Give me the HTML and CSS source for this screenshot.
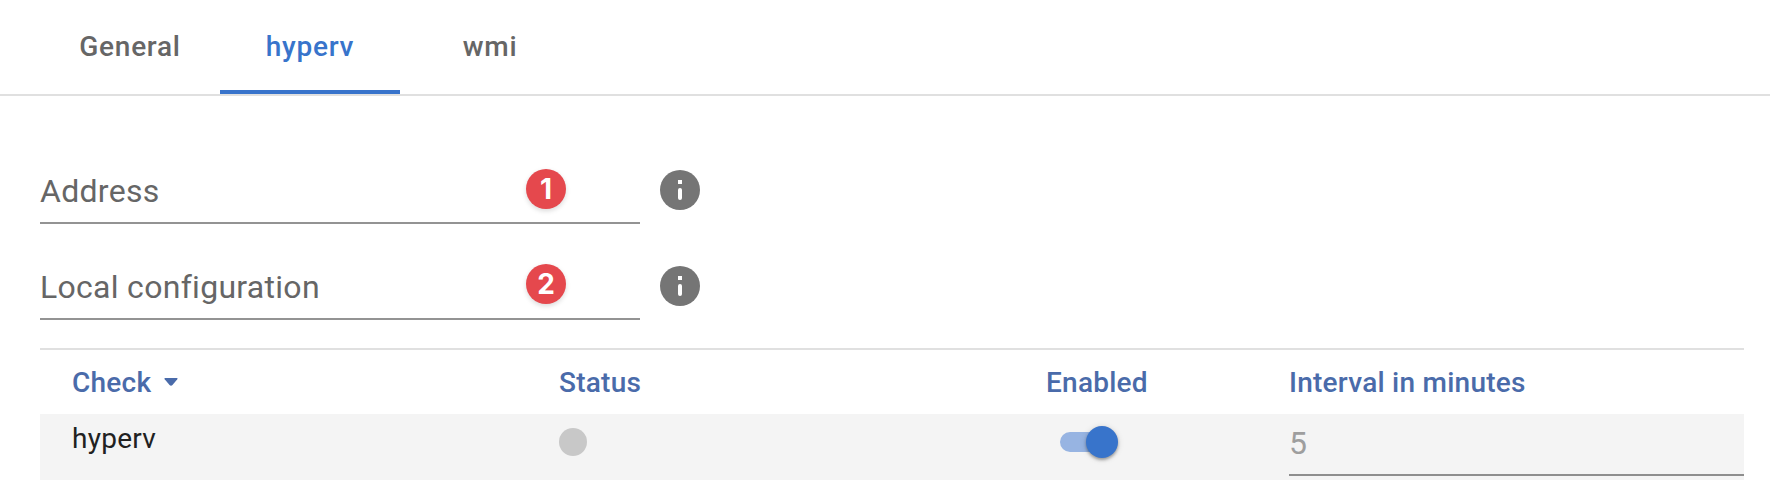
FILE: index.html
```html
<!DOCTYPE html>
<html lang="en">
<head>
<meta charset="utf-8">
<title>hyperv</title>
<link rel="stylesheet" href="styles.css">
</head>
<body>
<nav class="tabs">
  <a class="tab">General</a>
  <a class="tab active">hyperv</a>
  <a class="tab">wmi</a>
</nav>
<main class="content">
  <div class="field-row">
    <label class="field"><span class="field-label">Address</span><span class="badge">1</span></label>
    <svg class="info" viewBox="0 0 40 40"><circle cx="20" cy="20" r="20" fill="#757575"/><rect x="18" y="10" width="4" height="4" fill="#fff"/><rect x="18" y="18" width="4" height="12" rx="2" fill="#fff"/></svg>
  </div>
  <div class="field-row">
    <label class="field"><span class="field-label">Local configuration</span><span class="badge second">2</span></label>
    <svg class="info" viewBox="0 0 40 40"><circle cx="20" cy="20" r="20" fill="#757575"/><rect x="18" y="10" width="4" height="4" fill="#fff"/><rect x="18" y="18" width="4" height="12" rx="2" fill="#fff"/></svg>
  </div>
  <section class="checks">
    <div class="row head">
      <div class="cell sort"><span class="sort-label">Check</span><svg class="caret" viewBox="0 0 14 8"><path d="M1 0H13Q14 .3 13.3 1.2L8.5 7Q7 8.6 5.5 7L.7 1.2Q0 .3 1 0Z" fill="#4a6baa"/></svg></div>
      <div class="cell">Status</div>
      <div class="cell">Enabled</div>
      <div class="cell">Interval in minutes</div>
    </div>
    <div class="row item">
      <div class="cell name">hyperv</div>
      <div class="cell"><span class="dot"></span></div>
      <div class="cell"><span class="toggle"><span class="thumb"></span></span></div>
      <div class="cell interval">5</div>
    </div>
  </section>
</main>
</body>
</html>
```
FILE: styles.css
```css
* { box-sizing: border-box; }
body {
  margin: 0;
  background: #fff;
  font-family: Roboto, "Liberation Sans", sans-serif;
  color: #212121;
}
.tabs {
  display: flex;
  height: 96px;
  padding-left: 40px;
  border-bottom: 2px solid #e0e0e0;
}
.tab {
  width: 180px;
  height: 94px;
  text-align: center;
  font-size: 28px;
  line-height: 94px;
  font-weight: 500;
  letter-spacing: 0.75px;
  color: #666;
}
.active {
  color: #3874cb;
  border-bottom: 4px solid #3874cb;
}
.content { padding: 64px 26px 0 40px; }
.field-row {
  display: flex;
  gap: 20px;
  height: 64px;
  margin-bottom: 32px;
}
.field {
  display: flex;
  justify-content: space-between;
  width: 600px;
  padding-right: 74px;
  border-bottom: 2px solid #939393;
}
.field-label {
  padding-top: 12px;
  font-size: 32px;
  line-height: 38px;
  letter-spacing: 0.29px;
  color: #666;
}
.badge {
  width: 40px;
  height: 40px;
  margin-top: 9px;
  border-radius: 50%;
  background: #e5484d;
  box-shadow: 0 2px 5px rgba(0, 0, 0, 0.15);
  color: #fff;
  font: 700 28px/40px Inter, sans-serif;
  text-align: center;
}
.second { margin-top: 8px; }
.info {
  width: 40px;
  height: 40px;
  margin-top: 10px;
}
.checks {
  margin-top: -4px;
  border-top: 2px solid #e0e0e0;
}
.row {
  display: grid;
  grid-template-columns: 487px 487px 243px 1fr;
  padding-left: 32px;
}
.head {
  grid-template-rows: 64px;
  font-size: 28px;
  line-height: 66px;
  font-weight: 500;
  letter-spacing: 0.25px;
  color: #4a6baa;
}
.sort {
  display: flex;
  align-items: center;
  gap: 13px;
}
.sort-label { padding-top: 2px; }
.caret {
  width: 14px;
  height: 8px;
}
.item {
  height: 66px;
  background: #f4f4f4;
}
.name {
  padding-top: 8px;
  font-size: 28px;
  line-height: 33px;
  letter-spacing: 0.25px;
}
.dot {
  display: block;
  width: 28px;
  height: 28px;
  margin-top: 14px;
  border-radius: 50%;
  background: #c8c8c8;
}
.toggle {
  display: flex;
  justify-content: flex-end;
  align-items: center;
  width: 56px;
  height: 20px;
  margin: 18px 0 0 14px;
  border-radius: 10px;
  background: #97b4e2;
}
.thumb {
  flex: none;
  width: 32px;
  height: 32px;
  margin-right: -2px;
  border-radius: 50%;
  background: #3874cb;
  box-shadow: 0 2px 3px rgba(0, 0, 0, 0.3), 0 1px 6px rgba(0, 0, 0, 0.15);
}
.interval {
  height: 62px;
  padding-top: 10px;
  border-bottom: 2px solid #8e8e8e;
  font-size: 32px;
  line-height: 38px;
  color: #9e9e9e;
}
```
